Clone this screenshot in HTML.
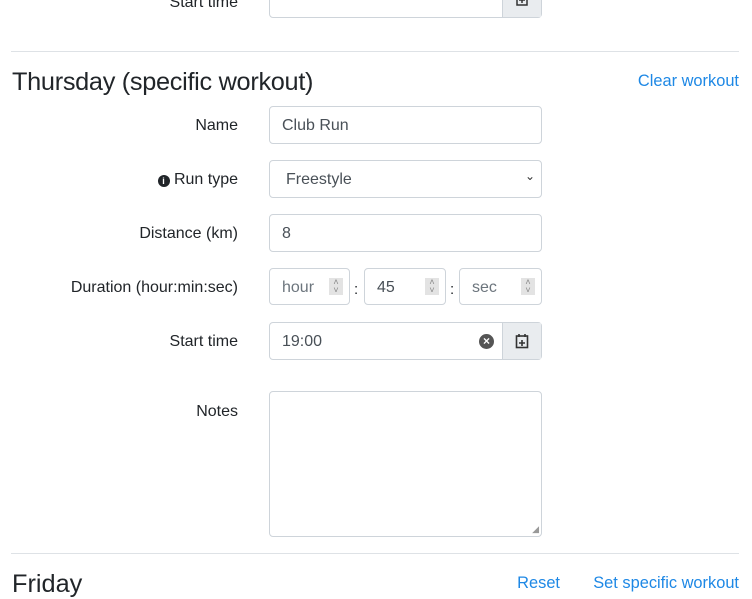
<!DOCTYPE html>
<html><head><style>
*{box-sizing:border-box}
body{margin:0;width:752px;height:598px;overflow:hidden;background:#fff;font-family:"Liberation Sans",sans-serif;color:#212529;position:relative}
.a{position:absolute}
.inp{position:absolute;border:1px solid #ced4da;border-radius:4px;background:#fff;font-size:16px;color:#495057;padding-left:12px;padding-top:2px;display:flex;align-items:center}
.lbl{position:absolute;right:514px;font-size:16px;color:#212529;text-align:right;white-space:nowrap}
.hr{position:absolute;left:11px;width:728px;border-top:1px solid #dee2e6}
.link{position:absolute;right:13px;color:#1e88e5;font-size:16.4px;white-space:nowrap}
.btn{position:absolute;background:#e9ecef;border-left:1px solid #ced4da;top:0;bottom:0;right:0;width:39px;display:flex;align-items:center;justify-content:center}
.spin{position:absolute;right:6px;top:9px;width:14px;height:17px;background:#e3e3e3;font-size:9px;color:#888;text-align:center;line-height:8px}
</style></head><body>
<div class="lbl" style="top:-6px">Start time</div>
<div class="inp" style="left:269px;top:-20px;width:273px;height:38px"><div class="btn"><svg width="14" height="14" viewBox="0 0 14 14"><rect x="2" y="2" width="10" height="11" fill="none" stroke="#333" stroke-width="1.5"/><path d="M7 5v6M4 8h6" stroke="#333" stroke-width="1.5"/></svg></div></div>
<div class="hr" style="top:51px"></div>
<div class="a" style="left:12px;top:68px;font-size:25.3px;letter-spacing:-0.3px">Thursday (specific workout)</div>
<div class="link" style="top:72px">Clear workout</div>

<div class="lbl" style="top:117px">Name</div>
<div class="inp" style="left:269px;top:106px;width:273px;height:38px">Club Run</div>

<div class="lbl" style="top:171px"><span style="display:inline-block;width:12px;height:12px;border-radius:50%;background:#212529;color:#fff;font-size:9px;line-height:12px;text-align:center;font-weight:bold;vertical-align:0px">i</span> Run type</div>
<div class="inp" style="left:269px;top:160px;width:273px;height:38px;padding-left:16px">Freestyle<span style="position:absolute;right:6px;top:8px;font-size:12px;color:#333">&#8964;</span></div>

<div class="lbl" style="top:225px">Distance (km)</div>
<div class="inp" style="left:269px;top:214px;width:273px;height:38px">8</div>

<div class="lbl" style="top:279px">Duration (hour:min:sec)</div>
<div class="inp" style="left:269px;top:268px;width:81px;height:37px;color:#6c757d">hour<div class="spin">&#708;<br>&#709;</div></div>
<div class="a" style="left:354px;top:281px;font-size:15px">:</div>
<div class="inp" style="left:364px;top:268px;width:82px;height:37px;padding-left:12px">45<div class="spin">&#708;<br>&#709;</div></div>
<div class="a" style="left:450px;top:281px;font-size:15px">:</div>
<div class="inp" style="left:459px;top:268px;width:83px;height:37px;color:#6c757d">sec<div class="spin">&#708;<br>&#709;</div></div>

<div class="lbl" style="top:333px">Start time</div>
<div class="inp" style="left:269px;top:322px;width:273px;height:38px">19:00
<span style="position:absolute;left:209px;top:11px;width:15px;height:15px;border-radius:50%;background:#555;color:#fff;font-size:12px;line-height:15px;text-align:center;font-weight:bold">×</span>
<div class="btn"><svg width="14" height="16" viewBox="0 0 14 16"><rect x="1.5" y="3" width="11" height="11.5" fill="none" stroke="#333" stroke-width="1.6"/><path d="M4 1v3M10 1v3M7 7v6M4 10h6" stroke="#333" stroke-width="1.6"/></svg></div></div>

<div class="lbl" style="top:403px">Notes</div>
<div class="inp" style="left:269px;top:391px;width:273px;height:146px"><span style="position:absolute;right:2px;bottom:1px;font-size:9px;color:#999">◢</span></div>

<div class="hr" style="top:553px"></div>
<div class="a" style="left:12px;top:570px;font-size:25.3px">Friday</div>
<div class="link" style="top:574px;right:192px">Reset</div>
<div class="link" style="top:574px">Set specific workout</div>
</body></html>
